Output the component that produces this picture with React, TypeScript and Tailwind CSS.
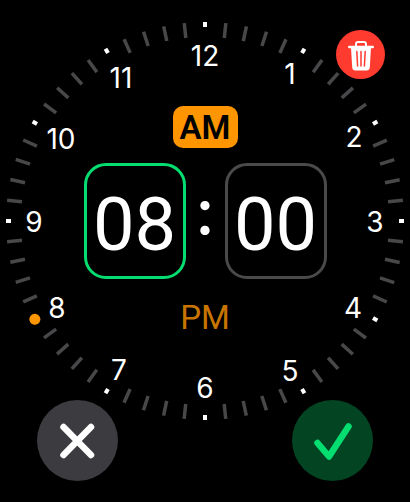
import { useState } from "react";

const NUMERALS = [
  { n: 12, x: 205, y: 40 },
  { n: 1, x: 290, y: 58 },
  { n: 2, x: 354, y: 121 },
  { n: 3, x: 375, y: 206 },
  { n: 4, x: 353, y: 292 },
  { n: 5, x: 290, y: 355 },
  { n: 6, x: 205, y: 372 },
  { n: 7, x: 119, y: 354 },
  { n: 8, x: 57, y: 292 },
  { n: 9, x: 34, y: 206 },
  { n: 10, x: 61, y: 123 },
  { n: 11, x: 121, y: 62 },
];

const DIAL = 410;

function Ticks({ hour }: { hour: number }) {
  return (
    <svg viewBox="0 0 410 410" className="absolute inset-0 h-full w-full" aria-hidden="true">
      {Array.from({ length: 60 }, (_, i) => {
        const turn = `rotate(${i * 6} 205 205)`;
        if (i === hour * 5) {
          return <circle key={i} cx="205" cy="8.5" r="5.5" fill="#ff9500" transform={turn} />;
        }
        return i % 5 === 0 ? (
          <rect key={i} x="203" y="6" width="4" height="5" fill="#fff" transform={turn} />
        ) : (
          <rect key={i} x="203.3" y="6" width="3.5" height="15" fill="#48484a" transform={turn} />
        );
      })}
    </svg>
  );
}

export default function App() {
  const [period, setPeriod] = useState("AM");
  const [hour, setHour] = useState("08");
  const [minute, setMinute] = useState("00");
  const periodClass = (p: string) =>
    p === period
      ? "h-[42px] w-[65px] rounded-[10px] bg-[#ff9500] text-[33px] leading-none font-semibold text-black"
      : "h-[42px] w-[65px] rounded-[10px] text-[33px] leading-none text-[#c87500]";

  return (
    <main className="min-h-screen bg-black pt-4 font-['Roboto',sans-serif] text-white">
      <div className="relative mx-auto w-full max-w-[410px]">
        <section className="relative aspect-square w-full" aria-label="Time">
          <Ticks hour={Number(hour) % 12} />
          {NUMERALS.map(({ n, x, y }) => (
            <span
              key={n}
              className="absolute -translate-x-1/2 -translate-y-1/2 font-['Inter',sans-serif] text-[28px] leading-none"
              style={{ left: `${(x / DIAL) * 100}%`, top: `${(y / DIAL) * 100}%` }}
            >
              {n}
            </span>
          ))}
          <div className="relative flex flex-col items-center pt-[90px]">
            <button type="button" aria-pressed={period === "AM"} onClick={() => setPeriod("AM")} className={periodClass("AM")}>
              AM
            </button>
            <div className="mt-[15px] flex items-center">
              <input
                aria-label="Hour"
                value={hour}
                onChange={(e) => setHour(e.target.value)}
                className="h-[116px] w-[102px] rounded-[22px] border-3 border-[#04de71] bg-transparent pt-1.5 text-center text-[74px] outline-none"
              />
              <span className="w-[39px] pb-[18px] text-center font-['Inter',sans-serif] text-[64px] leading-none font-medium">:</span>
              <input
                aria-label="Minute"
                value={minute}
                onChange={(e) => setMinute(e.target.value)}
                className="h-[116px] w-[102px] rounded-[22px] border-3 border-[#4a4a4c] bg-transparent pt-1.5 text-center text-[74px] outline-none"
              />
            </div>
            <button type="button" aria-pressed={period === "PM"} onClick={() => setPeriod("PM")} className={`mt-[17px] ${periodClass("PM")}`}>
              PM
            </button>
          </div>
        </section>

        <button
          type="button"
          aria-label="Delete"
          className="absolute top-3.5 right-[25px] flex size-[49px] items-center justify-center rounded-full bg-[#ff3b30]"
        >
          <svg viewBox="0 0 28 32" className="h-8 w-7" fill="none" stroke="#fff" strokeLinecap="round" strokeLinejoin="round">
            <path d="M9 7V5Q9 3 11.2 3H16.8Q19 3 19 5V7" strokeWidth="2" />
            <path d="M2.2 8H25.8" strokeWidth="2.4" />
            <path d="M5 8.5L6.2 28.5Q6.4 30.6 8.5 30.6H19.5Q21.6 30.6 21.8 28.5L23 8.5Z" fill="#fff" strokeWidth="2" />
            <path d="M9.8 12.5L10.6 27M14 12.5V27M18.2 12.5L17.4 27" stroke="#ff3b30" strokeWidth="1.5" />
          </svg>
        </button>

        <div className="relative -mt-[26px] flex justify-between px-[37px]">
          <button type="button" aria-label="Cancel" className="flex size-[81px] items-center justify-center rounded-full bg-[#3c3c40]">
            <svg viewBox="0 0 40 40" className="size-10" fill="none" stroke="#fff" strokeWidth="6.5" strokeLinecap="round">
              <path d="M5.5 6L33 34M33 6L5.5 34" />
            </svg>
          </button>
          <button type="button" aria-label="Confirm" className="flex size-[81px] items-center justify-center rounded-full bg-[#034422]">
            <svg viewBox="0 0 40 40" className="size-10" fill="none" stroke="#04de71" strokeWidth="6.5" strokeLinecap="round" strokeLinejoin="round">
              <path d="M4.5 22L16 35.5L35.5 5.5" />
            </svg>
          </button>
        </div>
      </div>
    </main>
  );
}
